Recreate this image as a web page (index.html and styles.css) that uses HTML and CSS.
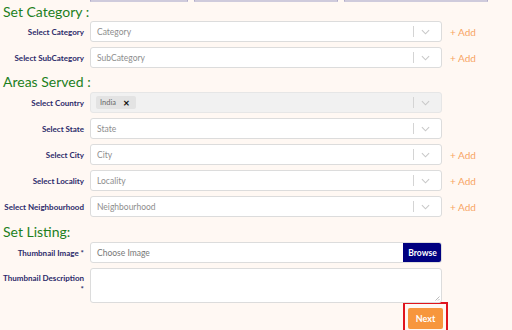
FILE: index.html
```html
<!DOCTYPE html>
<html>
<head>
<meta charset="utf-8">
<link rel="stylesheet" href="styles.css">
</head>
<body>
<div class="page">
  <div class="top-boxes">
    <div class="tbox tbox-1"></div>
    <div class="tbox tbox-2"></div>
    <div class="tbox tbox-3"></div>
  </div>

  <h2 class="section-title first">Set Category :</h2>
  <div class="row">
    <label class="lbl">Select Category</label>
    <div class="select"><span class="ph">Category</span><span class="ind"><span class="sep"></span><svg class="chev" viewBox="0 0 10 6" width="9" height="6"><path d="M1 1l4 4 4-4" fill="none" stroke="#c8c8c8" stroke-width="1.2"/></svg></span></div>
    <a class="add">+ Add</a>
  </div>
  <div class="row">
    <label class="lbl">Select SubCategory</label>
    <div class="select"><span class="ph">SubCategory</span><span class="ind"><span class="sep"></span><svg class="chev" viewBox="0 0 10 6" width="9" height="6"><path d="M1 1l4 4 4-4" fill="none" stroke="#c8c8c8" stroke-width="1.2"/></svg></span></div>
    <a class="add">+ Add</a>
  </div>

  <h2 class="section-title mid">Areas Served :</h2>
  <div class="row">
    <label class="lbl">Select Country</label>
    <div class="select disabled"><span class="chip">India <span class="chip-x">✕</span></span><span class="ind"><span class="sep"></span><svg class="chev" viewBox="0 0 10 6" width="9" height="6"><path d="M1 1l4 4 4-4" fill="none" stroke="#c8c8c8" stroke-width="1.2"/></svg></span></div>
  </div>
  <div class="row">
    <label class="lbl">Select State</label>
    <div class="select"><span class="ph">State</span><span class="ind"><span class="sep"></span><svg class="chev" viewBox="0 0 10 6" width="9" height="6"><path d="M1 1l4 4 4-4" fill="none" stroke="#c8c8c8" stroke-width="1.2"/></svg></span></div>
  </div>
  <div class="row">
    <label class="lbl">Select City</label>
    <div class="select"><span class="ph">City</span><span class="ind"><span class="sep"></span><svg class="chev" viewBox="0 0 10 6" width="9" height="6"><path d="M1 1l4 4 4-4" fill="none" stroke="#c8c8c8" stroke-width="1.2"/></svg></span></div>
    <a class="add">+ Add</a>
  </div>
  <div class="row">
    <label class="lbl">Select Locality</label>
    <div class="select"><span class="ph">Locality</span><span class="ind"><span class="sep"></span><svg class="chev" viewBox="0 0 10 6" width="9" height="6"><path d="M1 1l4 4 4-4" fill="none" stroke="#c8c8c8" stroke-width="1.2"/></svg></span></div>
    <a class="add">+ Add</a>
  </div>
  <div class="row">
    <label class="lbl">Select Neighbourhood</label>
    <div class="select"><span class="ph">Neighbourhood</span><span class="ind"><span class="sep"></span><svg class="chev" viewBox="0 0 10 6" width="9" height="6"><path d="M1 1l4 4 4-4" fill="none" stroke="#c8c8c8" stroke-width="1.2"/></svg></span></div>
    <a class="add">+ Add</a>
  </div>

  <h2 class="section-title listing">Set Listing:</h2>
  <div class="row">
    <label class="lbl">Thumbnail Image *</label>
    <div class="file"><span class="ph file-ph">Choose Image</span><span class="browse">Browse</span></div>
  </div>
  <div class="row row-top">
    <label class="lbl lbl-multi">Thumbnail Description<br>*</label>
    <div class="textarea"><svg class="grip" viewBox="0 0 6 6" width="6" height="6"><path d="M5.5 1.5L1.5 5.5M5.5 4L4 5.5" stroke="#aaa" stroke-width="0.8"/></svg></div>
  </div>
  <div class="actions">
    <div class="next-outline"><button class="next">Next</button></div>
  </div>
</div>
</body>
</html>
```

FILE: styles.css
```css
* { box-sizing: border-box; }
html, body { margin: 0; padding: 0; }
body {
  background: #fff8f3;
  font-family: Lato, "Open Sans", sans-serif;
  width: 512px;
  height: 330px;
  overflow: hidden;
}
.page {
  display: flex;
  flex-direction: column;
  padding-left: 3px;
}
.top-boxes {
  display: flex;
  gap: 6px;
  margin-left: 87px;
  height: 3px;
}
.tbox {
  height: 2px;
  border: 1px solid #a9a3c2;
  border-top: none;
  border-bottom: 2px solid #cfcbdc;
}
.tbox-1 { width: 98px; }
.tbox-2 { width: 144px; }
.tbox-3 { width: 144px; }

.section-title {
  margin: 0;
  font-size: 14px;
  font-weight: 400;
  color: #1d801d;
  line-height: 17px;
  height: 19px;
}
.section-title.first { height: 18px; }
.section-title.mid { margin-top: 5px; }
.section-title.listing { margin-top: 6px; }

.row {
  display: flex;
  align-items: center;
  height: 21px;
  margin-top: 5px;
}
.section-title + .row { margin-top: 0; }
.lbl {
  width: 87px;
  flex: none;
  padding-right: 6px;
  text-align: right;
  font-size: 8px;
  font-weight: 700;
  color: #2c2a6a;
  white-space: nowrap;
}
.select, .file, .textarea {
  width: 352px;
  flex: none;
  height: 21px;
  background: #fff;
  border: 1px solid #dcdcdc;
  border-radius: 3px;
  display: flex;
  align-items: center;
  position: relative;
}
.select.disabled { background: #f1f1f1; border-color: #e6e6e6; }
.ph {
  font-size: 8.5px;
  color: #8e8e8e;
  padding-left: 6px;
  flex: 1;
}
.ind {
  display: flex;
  align-items: center;
  height: 100%;
  margin-left: auto;
}
.sep {
  width: 1px;
  height: 11px;
  background: #d4d4d4;
  margin-right: 7px;
}
.chev { margin-right: 11px; display: block; }
.add {
  margin-left: 8px;
  font-size: 10px;
  color: #f7a463;
}
.chip {
  margin-left: 5px;
  background: #e3e3e3;
  border-radius: 2px;
  height: 13px;
  width: 40px;
  display: flex;
  align-items: center;
  padding-left: 4px;
  font-size: 7.5px;
  color: #6a6a6a;
}
.chip-x {
  margin-left: 7px;
  font-size: 8px;
  font-weight: 700;
  color: #111;
}
.file { overflow: hidden; }
.file-ph { color: #777; }
.browse {
  align-self: stretch;
  width: 39px;
  margin: -1px -1px -1px 0;
  background: #000080;
  color: #fff;
  font-size: 8.5px;
  font-weight: 700;
  display: flex;
  align-items: center;
  justify-content: center;
  border-radius: 0 3px 3px 0;
}
.row-top { align-items: flex-start; height: 35px; }
.lbl-multi { line-height: 11px; padding-top: 5px; }
.textarea { height: 35px; }
.grip { position: absolute; right: 1px; bottom: 1px; }
.actions {
  display: flex;
  margin-left: 400px;
  margin-top: -1px;
}
.next-outline {
  width: 45px;
  height: 32px;
  border: 2px solid #e0141e;
  padding: 4px 3px 0 3px;
}
.next {
  display: block;
  width: 35px;
  height: 21px;
  border: none;
  border-radius: 2px;
  background: #f7963d;
  color: #fff;
  font-family: Lato, sans-serif;
  font-size: 9px;
  font-weight: 700;
  padding: 0;
}
```
